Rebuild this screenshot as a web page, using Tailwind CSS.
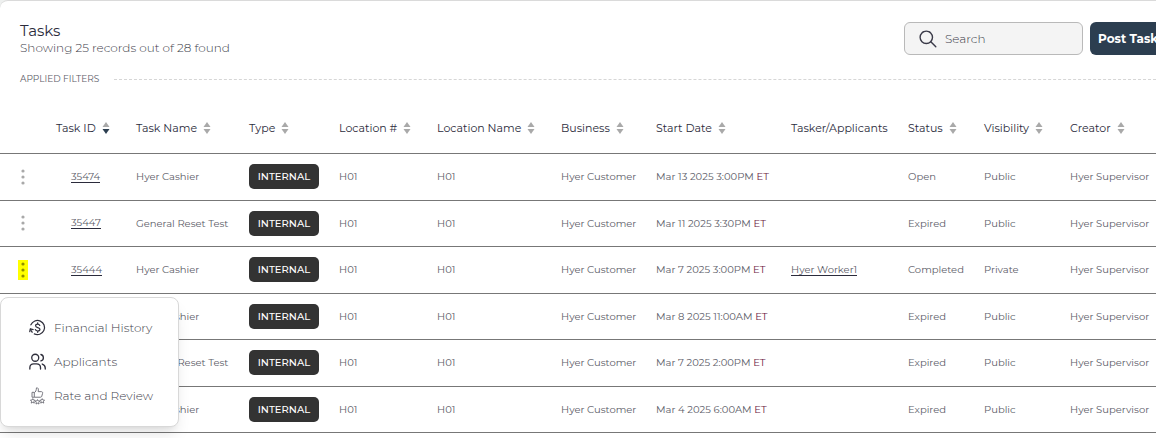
<!DOCTYPE html>
<html lang="en">
<head>
    <meta charset="UTF-8">
    <meta name="viewport" content="width=device-width, initial-scale=1.0">
    <title>Tasks</title>
    <script src="https://cdn.jsdelivr.net/npm/@tailwindcss/browser@4"></script>
</head>
<body class="bg-[#eef0ef] overflow-hidden font-[Montserrat,Inter,sans-serif] text-[#5c5c68]">

    <!-- shared icons -->
    <svg class="hidden">
        <symbol id="sort" viewBox="0 0 8 12"><path d="M4 0 7.5 5H.5z" fill="#a9a9a9"/><path d="M4 12 .5 7h7z" fill="#a9a9a9"/></symbol>
        <symbol id="sort-desc" viewBox="0 0 8 12"><path d="M4 0 7.5 5H.5z" fill="#a9a9a9"/><path d="M4 12 .5 7h7z" fill="#2c3e50"/></symbol>
        <symbol id="dots" viewBox="0 0 4 16"><circle cx="2" cy="2" r="1.6"/><circle cx="2" cy="8" r="1.6"/><circle cx="2" cy="14" r="1.6"/></symbol>
    </svg>

    <main class="-mr-10 min-h-screen bg-white border-t border-[#dadada] rounded-tl-lg pt-5">
        <header class="flex items-start justify-between pl-5 pr-6">
            <div>
                <h1 class="text-[15px] leading-5 text-[#2b2b3b]">Tasks</h1>
                <p class="text-[12px] leading-[14px] font-light text-[#3e3e4a]">Showing 25 records out of 28 found</p>
            </div>
            <div class="flex gap-[7px] mt-px">
                <label class="flex items-center w-[179px] h-[33px] pl-3.5 gap-2 rounded-md border border-[#b9b9b9] bg-[#f4f4f4]">
                    <svg class="w-[18px] h-[18px] shrink-0" viewBox="0 0 18 18" fill="none" stroke="#3a3a48" stroke-width="1.4" stroke-linecap="round"><circle cx="7.3" cy="7.3" r="6.2"/><path d="m11.8 11.8 5 5"/></svg>
                    <input type="text" placeholder="Search" aria-label="Search" class="w-full min-w-0 text-[12px] outline-none placeholder:font-light placeholder:text-[#3e3e4a]">
                </label>
                <button type="button" class="h-[33px] px-2 rounded-md bg-[#2c3e50] text-white text-[12px] font-bold whitespace-nowrap w-[82px]">Post Tasks</button>
            </div>
        </header>

        <div class="flex items-center gap-3 mt-[18px] pl-5">
            <span class="text-[9px] leading-3 uppercase w-[82px]">Applied Filters</span>
            <hr class="grow border-t border-dashed border-[#d6d6d6]">
        </div>

        <table class="mt-[18px] w-full table-fixed text-left text-[10px] border-collapse">
            <colgroup>
                <col class="w-[56px]"><col class="w-[80px]"><col class="w-[113px]"><col class="w-[90px]"><col class="w-[98px]"><col class="w-[124px]"><col class="w-[95px]"><col class="w-[135px]"><col class="w-[117px]"><col class="w-[76px]"><col class="w-[86px]"><col>
            </colgroup>
            <thead class="text-[11px] text-[#2b2b3b] whitespace-nowrap">
                <tr class="h-[50px] border-b border-[#777777]">
                    <th></th>
                    <th class="font-normal"><button class="flex items-center gap-1.5">Task ID <svg class="w-2 h-3"><use href="#sort-desc"/></svg></button></th>
                    <th class="font-normal"><button class="flex items-center gap-1.5">Task Name <svg class="w-2 h-3"><use href="#sort"/></svg></button></th>
                    <th class="font-normal"><button class="flex items-center gap-1.5">Type <svg class="w-2 h-3"><use href="#sort"/></svg></button></th>
                    <th class="font-normal"><button class="flex items-center gap-1.5">Location # <svg class="w-2 h-3"><use href="#sort"/></svg></button></th>
                    <th class="font-normal"><button class="flex items-center gap-1.5">Location Name <svg class="w-2 h-3"><use href="#sort"/></svg></button></th>
                    <th class="font-normal"><button class="flex items-center gap-1.5">Business <svg class="w-2 h-3"><use href="#sort"/></svg></button></th>
                    <th class="font-normal"><button class="flex items-center gap-1.5">Start Date <svg class="w-2 h-3"><use href="#sort"/></svg></button></th>
                    <th class="font-normal">Tasker/Applicants</th>
                    <th class="font-normal"><button class="flex items-center gap-1.5">Status <svg class="w-2 h-3"><use href="#sort"/></svg></button></th>
                    <th class="font-normal"><button class="flex items-center gap-1.5">Visibility <svg class="w-2 h-3"><use href="#sort"/></svg></button></th>
                    <th class="font-normal"><button class="flex items-center gap-1.5">Creator <svg class="w-2 h-3"><use href="#sort"/></svg></button></th>
                </tr>
            </thead>
            <tbody id="rows"></tbody>
        </table>
    </main>

    <template id="menu">
        <div class="absolute left-0 top-[50px] z-10 w-[179px] h-[130px] pl-7 flex flex-col justify-center gap-4 rounded-lg border border-[#d8d8d8] bg-white shadow-lg text-[12px] leading-[18px] font-light text-[#3e3e4a]">
            <button class="flex items-center gap-2 text-left">
                <svg class="w-[17px] h-[17px]" viewBox="0 0 18 18" fill="none" stroke="#2f2f3c" stroke-width="1.3" stroke-linecap="round" stroke-linejoin="round"><path d="M2 6.2A7.5 7.5 0 1 1 5.6 15.8"/><path d="M1.6 10.8A7.5 7.5 0 0 0 3.4 14"/><path d="m.8 13.4.6-3 3 .8"/><path d="M11.4 6.8c-.4-.9-1.2-1.3-2.2-1.3-1.3 0-2.2.7-2.2 1.7 0 2.5 4.6 1.2 4.6 3.7 0 1.1-1 1.8-2.4 1.8-1.2 0-2.1-.5-2.5-1.5M9.2 4.1v1.4M9.2 12.7v1.4"/></svg>
                Financial History
            </button>
            <button class="flex items-center gap-2 text-left">
                <svg class="w-[17px] h-[17px]" viewBox="0 0 18 18" fill="none" stroke="#2f2f3c" stroke-width="1.4" stroke-linecap="round"><circle cx="6.6" cy="5" r="3.7"/><path d="M.9 17v-1.3c0-2.6 1.9-4.1 4.2-4.1h2.8c2.4 0 4.3 1.5 4.3 4.1V17"/><path d="M12.6 1.6c3.5.9 3.5 5.9 0 6.8M14 11.7c2.1.6 3.2 2.1 3.2 4.1V17"/></svg>
                Applicants
            </button>
            <button class="flex items-center gap-2 text-left">
                <svg class="w-[17px] h-[18px]" viewBox="0 0 18 19" fill="none" stroke="#6f6f77" stroke-width="1" stroke-linejoin="round"><path d="M3.2 5.6h2.4v5.2H3.2zM5.6 6.2C7.2 5.1 7.7 3.4 7.9.9c1.8-.5 2.5 1.2 1.8 4h3.4c1.1 0 1.6.8 1.3 1.8l-.9 3.1c-.2.7-.7 1-1.4 1H5.6"/><path d="m4 12.3.8 1.5 1.7.2-1.2 1.2.3 1.8-1.6-.8-1.6.8.3-1.8L1.5 14l1.7-.2zM9 13.3l.8 1.5 1.7.2-1.2 1.2.3 1.8-1.6-.8-1.6.8.3-1.8L6.5 15l1.7-.2zM14 12.3l.8 1.5 1.7.2-1.2 1.2.3 1.8-1.6-.8-1.6.8.3-1.8-1.2-1.2 1.7-.2z"/></svg>
                Rate and Review
            </button>
        </div>
    </template>

    <script>
        const tasks = [
            { id: '35474', name: 'Hyer Cashier', date: 'Mar 13 2025 3:00PM', tasker: '', status: 'Open', vis: 'Public' },
            { id: '35447', name: 'General Reset Test', date: 'Mar 11 2025 3:30PM', tasker: '', status: 'Expired', vis: 'Public' },
            { id: '35444', name: 'Hyer Cashier', date: 'Mar 7 2025 3:00PM', tasker: 'Hyer Worker1', status: 'Completed', vis: 'Private', open: true },
            { id: '', name: 'Hyer Cashier', date: 'Mar 8 2025 11:00AM', tasker: '', status: 'Expired', vis: 'Public' },
            { id: '', name: 'General Reset Test', date: 'Mar 7 2025 2:00PM', tasker: '', status: 'Expired', vis: 'Public' },
            { id: '', name: 'Hyer Cashier', date: 'Mar 4 2025 6:00AM', tasker: '', status: 'Expired', vis: 'Public' }
        ];
        const menu = document.getElementById('menu').innerHTML;
        let html = '';
        for (const t of tasks) {
            const dots = t.open ? 'bg-[#ffff00] fill-[#8f8f00]' : 'fill-[#a9a9a9]';
            html += `<tr class="h-[47px] even:h-[46px] border-b border-[#777777] whitespace-nowrap">
                <td class="relative p-0"><button aria-label="Row actions" class="ml-[18px] flex items-center justify-center w-2.5 h-5 ${dots}"><svg class="w-1 h-4"><use href="#dots"/></svg></button>${t.open ? menu : ''}</td>
                <td class="p-0 pl-[15px]">${t.id ? `<a href="#" class="block w-fit leading-[11px] border-b border-[#2b2b3b]">${t.id}</a>` : ''}</td>
                <td class="p-0">${t.name}</td>
                <td class="p-0"><span class="flex items-center justify-center w-[70px] h-[25px] rounded-[5px] bg-[#333333] text-white font-medium">INTERNAL</span></td>
                <td class="p-0">H01</td>
                <td class="p-0">H01</td>
                <td class="p-0">Hyer Customer</td>
                <td class="p-0">${t.date} <span class="text-[#6b1740]">ET</span></td>
                <td class="p-0">${t.tasker ? `<a href="#" class="inline-block leading-[11px] border-b border-[#2b2b3b]">${t.tasker}</a>` : ''}</td>
                <td class="p-0">${t.status}</td>
                <td class="p-0">${t.vis}</td>
                <td class="p-0">Hyer Supervisor</td>
            </tr>`;
        }
        document.getElementById('rows').innerHTML = html;
    </script>
</body>
</html>
